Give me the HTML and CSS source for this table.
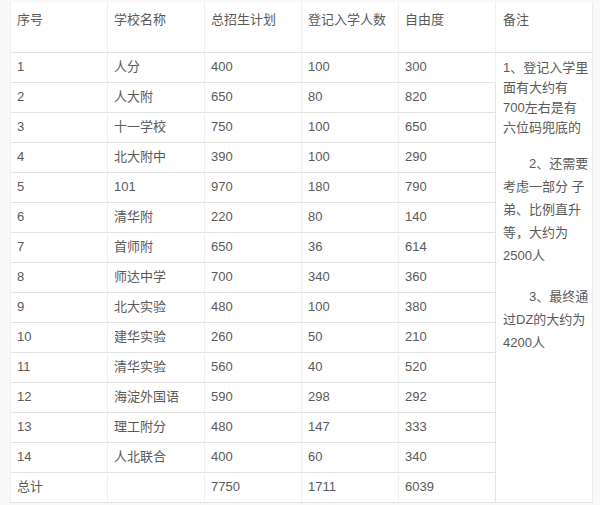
FILE: index.html
```html
<!DOCTYPE html>
<html lang="zh-CN">
<head>
<meta charset="utf-8">
<title>学校招生统计</title>
<link rel="stylesheet" href="styles.css">
</head>
<body>
<table class="grid">
  <colgroup>
    <col class="c"><col class="c"><col class="c"><col class="c"><col class="c"><col class="c">
  </colgroup>
  <thead>
    <tr class="head">
      <th>序号</th><th>学校名称</th><th>总招生计划</th><th>登记入学人数</th><th>自由度</th><th class="note-h">备注</th>
    </tr>
  </thead>
  <tbody>
    <tr><td>1</td><td>人分</td><td>400</td><td>100</td><td>300</td>
      <td class="note" rowspan="15">
        <p class="p1">1、登记入学里<br>面有大约有<br>700左右是有<br>六位码兜底的</p>
        <p class="p2 ind">2、还需要<br>考虑一部分 子<br>弟、比例直升<br>等，大约为<br>2500人</p>
        <p class="p3 ind">3、最终通<br>过DZ的大约为<br>4200人</p>
      </td></tr>
    <tr><td>2</td><td>人大附</td><td>650</td><td>80</td><td>820</td></tr>
    <tr><td>3</td><td>十一学校</td><td>750</td><td>100</td><td>650</td></tr>
    <tr><td>4</td><td>北大附中</td><td>390</td><td>100</td><td>290</td></tr>
    <tr><td>5</td><td>101</td><td>970</td><td>180</td><td>790</td></tr>
    <tr><td>6</td><td>清华附</td><td>220</td><td>80</td><td>140</td></tr>
    <tr><td>7</td><td>首师附</td><td>650</td><td>36</td><td>614</td></tr>
    <tr><td>8</td><td>师达中学</td><td>700</td><td>340</td><td>360</td></tr>
    <tr><td>9</td><td>北大实验</td><td>480</td><td>100</td><td>380</td></tr>
    <tr><td>10</td><td>建华实验</td><td>260</td><td>50</td><td>210</td></tr>
    <tr><td>11</td><td>清华实验</td><td>560</td><td>40</td><td>520</td></tr>
    <tr><td>12</td><td>海淀外国语</td><td>590</td><td>298</td><td>292</td></tr>
    <tr><td>13</td><td>理工附分</td><td>480</td><td>147</td><td>333</td></tr>
    <tr><td>14</td><td>人北联合</td><td>400</td><td>60</td><td>340</td></tr>
    <tr class="total"><td>总计</td><td></td><td>7750</td><td>1711</td><td>6039</td></tr>
  </tbody>
</table>
</body>
</html>
```
FILE: styles.css
```css
html, body {
  margin: 0;
  padding: 0;
  background: #f9f9f9;
}
body {
  padding: 2px 0 0 10px;
  font-family: "Liberation Sans", "Noto Sans CJK SC", sans-serif;
  font-size: 13px;
  color: #5a5a5a;
}
.grid {
  border-collapse: collapse;
  table-layout: fixed;
  width: 582px;
  background: #fff;
}
.grid .c { width: 97px; }
.grid th, .grid td {
  border-left: 1px solid #f0f0f0;
  border-right: 1px solid #f0f0f0;
  padding: 0 2px 0 6px;
  text-align: left;
  font-weight: normal;
  line-height: 20px;
  white-space: nowrap;
}
.grid tr { height: 30px; }
.grid tr.head { height: 50px; }
.grid tbody tr td { border-top: 1px solid #e4e4e4; vertical-align: middle; }
.grid tbody tr.total td { border-bottom: 1px solid #e4e4e4; }
.grid tr.head th { vertical-align: top; padding-top: 8px; }
.grid th.note-h, .grid td.note {
  border-left: 1px solid #e6e6e6;
  border-right: 1px solid #ececec;
  padding-left: 7px;
}
.grid td.note {
  vertical-align: top;
  padding-top: 5px;
  border-bottom: 1px solid #e4e4e4;
}
.note p { margin: 0; }
.p1 { line-height: 20px; }
.p2 { line-height: 23px; margin-top: 14px !important; }
.p3 { line-height: 23px; margin-top: 18px !important; }
.ind { text-indent: 26px; }
```
